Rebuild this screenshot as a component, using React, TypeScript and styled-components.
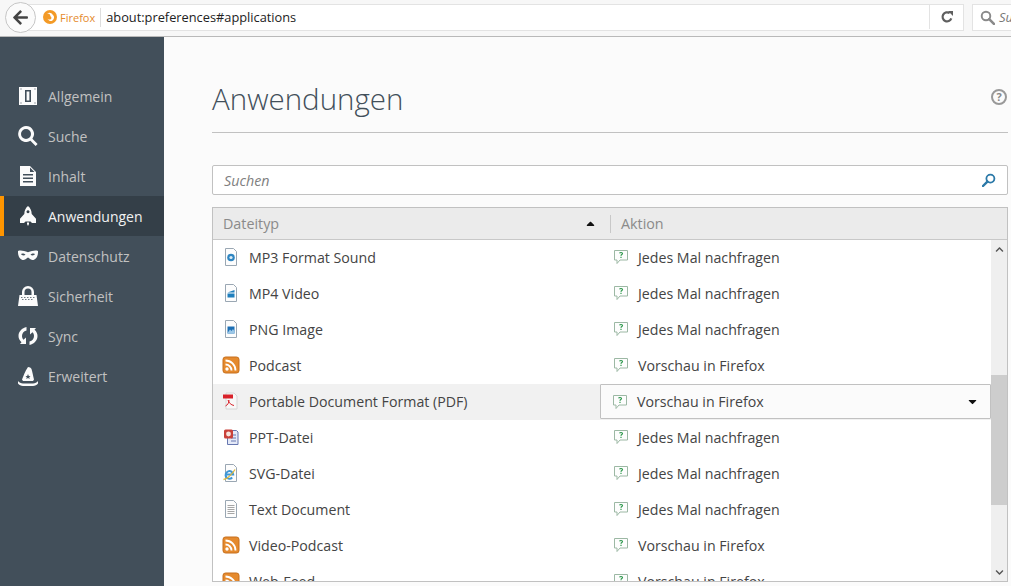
import styled, { createGlobalStyle } from 'styled-components';
import { ReactNode } from 'react';
import { FaArrowLeft, FaCaretDown, FaCaretUp, FaChevronDown, FaChevronUp } from 'react-icons/fa';

const GlobalStyle = createGlobalStyle`
  html, body {
    margin: 0;
    padding: 0;
    height: 586px;
    overflow: hidden;
    background: #fbfbfb;
    font-family: 'Open Sans', 'Noto Sans', sans-serif;
  }
  * { box-sizing: border-box; }
`;

const Page = styled.div`
  width: 1011px;
  height: 586px;
  display: flex;
  flex-direction: column;
  overflow: hidden;
`;

const Toolbar = styled.header`
  height: 37px;
  flex: none;
  display: flex;
  align-items: center;
  gap: 6px;
  padding: 0 0 2px 5px;
  background: #f7f7f7;
  border-bottom: 1px solid #b9b9b9;
`;

const BackButton = styled.div`
  width: 31px;
  height: 31px;
  flex: none;
  margin-right: -15px;
  z-index: 1;
  border-radius: 50%;
  background: #fbfbfb;
  border: 1px solid #c6c6c6;
  color: #444;
  display: flex;
  align-items: center;
  justify-content: center;
`;

const UrlBar = styled.div`
  width: 937px;
  height: 27px;
  flex: none;
  display: flex;
  align-items: center;
  padding-left: 16px;
  background: #fff;
  border: 1px solid #e3e3e3;
  border-left: none;
`;

const Identity = styled.span`
  display: flex;
  align-items: center;
  gap: 3px;
  height: 19px;
  padding-right: 5px;
  margin-right: 5px;
  border-right: 1px solid #ddd;
  color: #e58a2b;
  font-size: 11px;
  flex: none;
`;

const Url = styled.span`
  flex: 1;
  font-size: 12.8px;
  color: #222;
`;

const Reload = styled.span`
  width: 34px;
  height: 24px;
  display: flex;
  align-items: center;
  justify-content: center;
  border-left: 1px solid #e3e3e3;
`;

const SearchBar = styled.div`
  flex: 1;
  height: 27px;
  margin-left: 2px;
  display: flex;
  align-items: center;
  gap: 4px;
  padding-left: 7px;
  background: #fff;
  border: 1px solid #e3e3e3;
  border-right: none;
  overflow: hidden;
  font-size: 13px;
  font-style: italic;
  color: #777;
`;

const Body = styled.div`
  flex: 1;
  display: flex;
  min-height: 0;
`;

const Sidebar = styled.nav`
  width: 164px;
  flex: none;
  padding-top: 39px;
  background: #424f5a;
`;

const NavItem = styled.div<{ $active?: boolean }>`
  height: 40px;
  display: flex;
  align-items: center;
  gap: 10px;
  padding-left: ${(p) => (p.$active ? '14px' : '18px')};
  border-left: ${(p) => (p.$active ? '4px solid #ff9500' : 'none')};
  background: ${(p) => (p.$active ? '#343f48' : 'transparent')};
  color: ${(p) => (p.$active ? '#f2f2f2' : '#c1c1c1')};
  font-size: 14px;
`;

const NavIcon = styled.svg`
  width: 20px;
  height: 20px;
  flex: none;
  fill: #fbfbfb;
`;

const Main = styled.main`
  flex: 1;
  min-width: 0;
  padding: 0 3px 0 48px;
`;

const TitleRow = styled.div`
  height: 96px;
  display: flex;
  align-items: flex-start;
  justify-content: space-between;
  padding-top: 40px;
  border-bottom: 1px solid #c1c1c1;
`;

const Title = styled.h1`
  margin: 0;
  font-size: 29.5px;
  line-height: 44px;
  font-weight: 300;
  color: #424f5a;
`;

const Help = styled.span`
  width: 16px;
  height: 16px;
  margin: 12px 1px 0 0;
  border-radius: 50%;
  border: 2px solid #999;
  color: #888;
  font-size: 11px;
  font-weight: 700;
  line-height: 12px;
  text-align: center;
`;

const FilterBox = styled.div`
  height: 30px;
  margin-top: 32px;
  display: flex;
  align-items: center;
  justify-content: space-between;
  padding: 0 11px;
  background: #fff;
  border: 1px solid #c1c1c1;
  border-radius: 2px;
  color: #808080;
  font-size: 14.3px;
  font-style: italic;
`;

const TableBox = styled.section`
  height: 375px;
  margin-top: 12px;
  background: #fff;
  border: 1px solid #c1c1c1;
  overflow: hidden;
`;

const HeaderRow = styled.div`
  height: 32px;
  display: flex;
  align-items: center;
  background: #ebebeb;
  border-bottom: 1px solid #c8c8c8;
  color: #8a8a8a;
  font-size: 14.3px;
`;

const HeaderType = styled.div`
  width: 398px;
  height: 18px;
  flex: none;
  display: flex;
  align-items: center;
  justify-content: space-between;
  padding: 0 13px 0 10px;
  border-right: 1px solid #c8c8c8;
`;

const HeaderAction = styled.div`
  padding-left: 10px;
`;

const TableBody = styled.div`
  display: flex;
  height: 341px;
`;

const Rows = styled.div`
  flex: 1;
  min-width: 0;
  overflow: hidden;
`;

const Row = styled.div<{ $selected?: boolean }>`
  height: 36px;
  flex: none;
  display: flex;
  align-items: center;
  padding: 0 0 2px 9px;
  background: ${(p) => (p.$selected ? '#f1f1f1' : 'transparent')};
  color: #444;
  font-size: 14.2px;
`;

const TypeCell = styled.div`
  width: 369px;
  flex: none;
  display: flex;
  align-items: center;
  gap: 9px;
`;

const TypeIcon = styled.svg`
  width: 18px;
  height: 18px;
  flex: none;
`;

const ActionCell = styled.div`
  display: flex;
  align-items: center;
  gap: 9px;
  padding-left: 22px;
`;

const ActionSelect = styled.div`
  flex: 1;
  height: 35px;
  align-self: flex-start;
  display: flex;
  align-items: center;
  gap: 9px;
  margin-left: 9px;
  padding: 0 11px 0 11px;
  background: #fbfbfb;
  border: 1px solid #c1c1c1;
  border-radius: 1px;
`;

const SelectLabel = styled.span`
  flex: 1;
`;

const BubbleIcon = styled.svg`
  width: 16px;
  height: 16px;
  flex: none;
`;

const ScrollTrack = styled.div`
  width: 16px;
  flex: none;
  display: flex;
  flex-direction: column;
  background: #efefef;
  color: #555;
`;

const ScrollButton = styled.div`
  height: 18px;
  flex: none;
  display: flex;
  align-items: center;
  justify-content: center;
`;

const ScrollGap = styled.div<{ $size: number }>`
  height: ${(p) => p.$size}px;
  flex: none;
`;

const ScrollThumb = styled.div`
  height: 130px;
  flex: none;
  background: #cdcdcd;
`;

const FirefoxMark = () => (
  <svg width="14" height="14" viewBox="0 0 14 14">
    <circle cx="7" cy="7" r="7" fill="#f39a26" />
    <path d="M4 3.500a4.600 4.600 0 0 1 6 1.500 3.400 3.400 0 1 1-5.600 3.400 2.600 2.600 0 0 0 3.600.6 1.700 1.700 0 0 0-.6-2.700A3 3 0 0 0 4 3.500z" fill="#fff" />
  </svg>
);

const ReloadIcon = () => (
  <svg width="14" height="14" viewBox="0 0 14 14">
    <path d="M11.300 8.400A4.500 4.500 0 1 1 9.700 3.200" fill="none" stroke="#5f5f5f" strokeWidth="2.200" />
    <path d="M8 1h5v5z" fill="#5f5f5f" />
  </svg>
);

const Magnifier = ({ color, size }: { color: string; size: number }) => (
  <svg width={size} height={size} viewBox="0 0 14 14" style={{ flex: 'none' }}>
    <circle cx="5.600" cy="5.600" r="4" fill="none" stroke={color} strokeWidth="1.800" />
    <path d="M8.600 8.600L13 13" stroke={color} strokeWidth="2.400" strokeLinecap="round" />
  </svg>
);

const FilterMagnifier = () => (
  <svg width="14" height="14" viewBox="0 0 14 14">
    <circle cx="8.400" cy="5.600" r="4" fill="none" stroke="#2b79a8" strokeWidth="1.800" />
    <path d="M5.400 8.600L1 13" stroke="#2b79a8" strokeWidth="2.400" strokeLinecap="round" />
  </svg>
);

const navIcons: Record<string, ReactNode> = {
  general: (
    <path fillRule="evenodd" d="M1 1h18v18H1zM7 4v12h6V4zM8.600 5.500h2.800v9H8.600zM2.500 2.500v1h1v-1zM16.500 2.500v1h1v-1zM2.500 16.500v1h1v-1zM16.500 16.500v1h1v-1z" />
  ),
  search: (
    <path fillRule="evenodd" d="M8 0a8 8 0 0 1 6.400 12.800l5.200 5.200-2 2-5.200-5.200A8 8 0 1 1 8 0zm0 3a5 5 0 1 0 0 10A5 5 0 0 0 8 3z" />
  ),
  content: (
    <path fillRule="evenodd" d="M2 0h10l6 6v14H2zM12 1.500V6h4.500zM5 8v1.600h10V8zM5 11.500v1.600h10v-1.600zM5 15v1.600h10V15z" />
  ),
  apps: (
    <path fillRule="evenodd" d="M10 0c2.400 1.800 3.600 4.600 3.700 8l4.300 4.800V17h-4l-1.500-1.500h-5L6 17H2v-4.200L6.300 8C6.400 4.600 7.600 1.800 10 0zM10 4.200a1.500 1.500 0 1 0 .01 0zM9 16.500h2V18l-1 2-1-2z" />
  ),
  privacy: (
    <path fillRule="evenodd" d="M0 5c3-1 6 0 10 1.300C14 5 17 4 20 5c.3 5-2 9-5.500 9-2.500 0-3.300-2.500-4.500-2.500S8 14 5.500 14C2 14-.3 10 0 5zM3 8c.5 1.500 3 2 4.500.8C6.500 7.500 4 7 3 8zm14 0c-1-1-3.500-.5-4.500.8 1.500 1.200 4 .7 4.500-.8z" />
  ),
  security: (
    <path fillRule="evenodd" d="M10 0a6 6 0 0 1 6 6v3h2.500L20 20H0L1.500 9H4V6a6 6 0 0 1 6-6zm0 2.500A3.500 3.500 0 0 0 6.500 6v3h7V6A3.500 3.500 0 0 0 10 2.500zM3 11v.8h1.500V11zm3 0v.8h1.500V11zm3 0v.8h1.500V11zm3 0v.8h1.500V11zm3 0v.8h1.500V11zM4 13v.8h1.500V13zm3 0v.8h1.500V13zm3 0v.8h1.500V13zm3 0v.8h1.500V13z" />
  ),
  sync: (
    <path d="M8.500 1v3.500C5.500 5 4 7.500 4 10c0 1.500.5 2.800 1.500 3.800L8 11.500V18H2l1.500-1.800C1.500 14.500.5 12.300.5 10 .5 5.500 4 2 8.500 1zM11.500 19v-3.500c3-.5 4.500-3 4.500-5.500 0-1.500-.5-2.800-1.500-3.800L12 8.500V2h6l-1.500 1.800c2 1.700 3 3.900 3 6.200 0 4.500-3.500 8-8 9z" />
  ),
  advanced: (
    <path fillRule="evenodd" d="M10 1c1.500 0 3 .8 3.500 2 1 3 1.500 7 2.500 10.500l-1 1.500H5l-1-1.500C5.500 10 7 5 10 1zM10 8l-.8 2H7.500l1.300 1.200-.5 1.800 1.700-1 1.700 1-.5-1.800 1.300-1.200h-1.700zM0 15c1 1.500 3 2.500 5 2.500h10c2 0 4-1 5-2.500v2.500c-1 1.500-3 2.500-5 2.500H5c-2 0-4-1-5-2.500z" />
  ),
};

const navItems = [
  { key: 'general', label: 'Allgemein' },
  { key: 'search', label: 'Suche' },
  { key: 'content', label: 'Inhalt' },
  { key: 'apps', label: 'Anwendungen', active: true },
  { key: 'privacy', label: 'Datenschutz' },
  { key: 'security', label: 'Sicherheit' },
  { key: 'sync', label: 'Sync' },
  { key: 'advanced', label: 'Erweitert' },
];

const Sheet = ({ children }: { children?: ReactNode }) => (
  <>
    <path d="M3.500 .5h8l3 3v14h-11z" fill="#fdfdfd" stroke="#9aa7b3" />
    {children}
  </>
);

const fileIcons: Record<string, ReactNode> = {
  audio: (
    <Sheet>
      <circle cx="9" cy="9.500" r="3.800" fill="#2f86c2" />
      <circle cx="9" cy="9.500" r="1.600" fill="#dcecf6" />
    </Sheet>
  ),
  video: (
    <Sheet>
      <path d="M5.500 8.500l7-2.500v2.500zM5.500 9.500h7v4h-7z" fill="#1f7fbd" />
    </Sheet>
  ),
  image: (
    <Sheet>
      <path d="M5.500 6.500h7v7h-7z" fill="#1c6fb5" />
      <path d="M5.500 13l2.500-3.500 1.500 1.500 1.500-2 1.500 2.500v2h-7z" fill="#9cc8e8" />
    </Sheet>
  ),
  rss: (
    <>
      <rect x="1" y="1" width="16" height="16" rx="2.500" fill="#e58a2e" stroke="#c76f1c" />
      <circle cx="5" cy="13" r="1.700" fill="#fff" />
      <path d="M3.500 8.500a6 6 0 0 1 6 6M3.500 4.500a10 10 0 0 1 10 10" fill="none" stroke="#fff" strokeWidth="1.900" />
    </>
  ),
  pdf: (
    <>
      <path d="M4 1h8l3 3v13H4z" fill="#f8f8f8" stroke="#d6d6d6" />
      <path d="M1 2.500h10v4H1z" fill="#d8222a" />
      <path d="M6 8c1 3 3 5 6 5.500M7 8c0 3-1.500 5-3.500 6" fill="none" stroke="#d8222a" strokeWidth="1" />
    </>
  ),
  ppt: (
    <>
      <path d="M5.500 2.500h9l1.500 1.500v12.500H5.500z" fill="#e4e9f7" stroke="#6677b0" />
      <path d="M9 7h5M9 10h5M9 13h5" stroke="#6677b0" />
      <rect x="2" y="1.500" width="9" height="9" rx="1.500" fill="#c9413a" />
      <circle cx="6.500" cy="6" r="2.400" fill="#f7e3dc" />
    </>
  ),
  svg: (
    <Sheet>
      <path d="M3.800 10.500h7.400a3.800 3.800 0 1 0-1 3" fill="none" stroke="#3e96d6" strokeWidth="2" />
      <path d="M1.500 15.500c3 0 8.500-5 11.500-10" fill="none" stroke="#e0b93a" strokeWidth="1.300" />
    </Sheet>
  ),
  text: (
    <Sheet>
      <path d="M5.500 5.500h7M5.500 7.500h7M5.500 9.500h7M5.500 11.500h7M5.500 13.500h7" stroke="#a6a6a6" />
    </Sheet>
  ),
};

const rows = [
  { icon: 'audio', type: 'MP3 Format Sound', action: 'Jedes Mal nachfragen' },
  { icon: 'video', type: 'MP4 Video', action: 'Jedes Mal nachfragen' },
  { icon: 'image', type: 'PNG Image', action: 'Jedes Mal nachfragen' },
  { icon: 'rss', type: 'Podcast', action: 'Vorschau in Firefox' },
  { icon: 'pdf', type: 'Portable Document Format (PDF)', action: 'Vorschau in Firefox', selected: true },
  { icon: 'ppt', type: 'PPT-Datei', action: 'Jedes Mal nachfragen' },
  { icon: 'svg', type: 'SVG-Datei', action: 'Jedes Mal nachfragen' },
  { icon: 'text', type: 'Text Document', action: 'Jedes Mal nachfragen' },
  { icon: 'rss', type: 'Video-Podcast', action: 'Vorschau in Firefox' },
  { icon: 'rss', type: 'Web-Feed', action: 'Vorschau in Firefox' },
];

const Bubble = () => (
  <BubbleIcon viewBox="0 0 16 16">
    <path d="M1.500 1.500h13v9.500H7l-3 3.500V11H1.500z" fill="#fdfdfd" stroke="#9cb8a4" />
    <path d="M6.500 4.200c.6-1 3-1 3 .4 0 1-1.500 1-1.500 2.200" fill="none" stroke="#2f9a4e" strokeWidth="1.200" />
    <path d="M7.400 7.800h1.200v1.300H7.400z" fill="#2f9a4e" />
  </BubbleIcon>
);

export default function App() {
  return (
    <Page>
      <GlobalStyle />
      <Toolbar>
        <BackButton>
          <FaArrowLeft size={17} />
        </BackButton>
        <UrlBar>
          <Identity>
            <FirefoxMark />
            Firefox
          </Identity>
          <Url>about:preferences#applications</Url>
          <Reload>
            <ReloadIcon />
          </Reload>
        </UrlBar>
        <SearchBar>
          <Magnifier color="#8a8a8a" size={15} />
          Suchen
        </SearchBar>
      </Toolbar>
      <Body>
        <Sidebar>
          {navItems.map((item) => (
            <NavItem key={item.key} $active={item.active}>
              <NavIcon viewBox="0 0 20 20">{navIcons[item.key]}</NavIcon>
              {item.label}
            </NavItem>
          ))}
        </Sidebar>
        <Main>
          <TitleRow>
            <Title>Anwendungen</Title>
            <Help>?</Help>
          </TitleRow>
          <FilterBox>
            Suchen
            <FilterMagnifier />
          </FilterBox>
          <TableBox>
            <HeaderRow>
              <HeaderType>
                Dateityp
                <FaCaretUp size={13} color="#111" />
              </HeaderType>
              <HeaderAction>Aktion</HeaderAction>
            </HeaderRow>
            <TableBody>
              <Rows>
                {rows.map((row) => (
                  <Row key={row.type} $selected={row.selected}>
                    <TypeCell>
                      <TypeIcon viewBox="0 0 18 18">{fileIcons[row.icon]}</TypeIcon>
                      {row.type}
                    </TypeCell>
                    {row.selected ? (
                      <ActionSelect>
                        <Bubble />
                        <SelectLabel>{row.action}</SelectLabel>
                        <FaCaretDown size={13} color="#111" />
                      </ActionSelect>
                    ) : (
                      <ActionCell>
                        <Bubble />
                        {row.action}
                      </ActionCell>
                    )}
                  </Row>
                ))}
              </Rows>
              <ScrollTrack>
                <ScrollButton>
                  <FaChevronUp size={9} />
                </ScrollButton>
                <ScrollGap $size={117} />
                <ScrollThumb />
                <ScrollGap $size={58} />
                <ScrollButton>
                  <FaChevronDown size={9} />
                </ScrollButton>
              </ScrollTrack>
            </TableBody>
          </TableBox>
        </Main>
      </Body>
    </Page>
  );
}
